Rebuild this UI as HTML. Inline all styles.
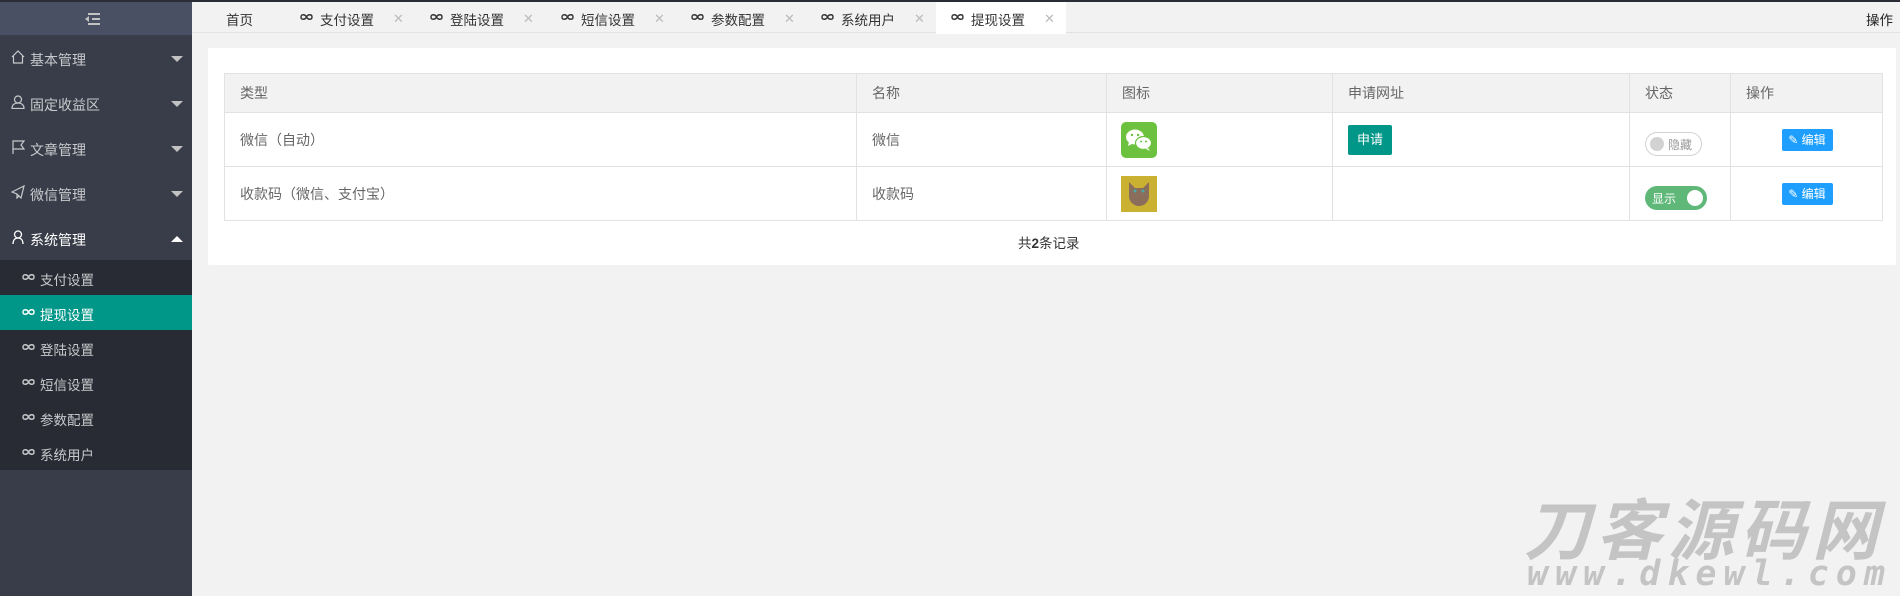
<!DOCTYPE html>
<html><head><meta charset="utf-8">
<style>
*{margin:0;padding:0;box-sizing:border-box}
body{width:1900px;height:596px;overflow:hidden;background:#f2f2f2;font-family:"Liberation Sans","Noto Sans CJK SC",sans-serif;font-size:14px;color:#666;position:relative}
.topline{position:absolute;left:0;top:0;width:1900px;height:2px;background:#2a2d35}
.side{position:absolute;left:0;top:2px;width:192px;height:594px;background:#393d49}
.shead{height:33px;background:#4a5064;position:relative}
.mi{height:45px;position:relative;color:#c8c9cc;font-size:14px}
.mi span{position:absolute;left:30px;top:15px}
.mi b{position:absolute;right:9px;top:21px;width:0;height:0;border-left:6px solid transparent;border-right:6px solid transparent;border-top:6px solid #c2c2c2}
.mi b.up{border-top:0;border-bottom:6px solid #fff}
.sub{background:#282b33;position:absolute;top:258px;left:0;width:192px}
.si{height:35px;position:relative;color:#c8c9cc;font-size:13.5px}
.si span{position:absolute;left:40px;top:9px}
.si svg{position:absolute;left:22px;top:13px}
.si.on{background:#009688;color:#fff}
.tabs{position:absolute;left:192px;top:2px;width:1708px;height:31px;background:#f2f2f2;border-bottom:1px solid #e2e2e2}
.tab{position:absolute;top:0;height:31px;font-size:13.5px;color:#333}
.tab svg{position:absolute;top:11px}
.tab .x{position:absolute;top:9px;color:#bbb;font-size:13px}
.card{position:absolute;left:208px;top:48px;width:1688px;height:217px;background:#fff;border-radius:2px}
table{position:absolute;left:16px;top:25px;border-collapse:collapse;width:1658px;table-layout:fixed}
td,th{border:1px solid #e2e2e2;text-align:left;font-weight:normal;padding:0 15px;font-size:14px;color:#666}
th{background:#f2f2f2;height:39px}
td{height:54px}
.btn{display:inline-block;background:#009688;color:#fff;font-size:13px;width:44px;height:30px;line-height:30px;text-align:center;border-radius:2px}
.edit{display:inline-block;background:#1e9fff;color:#fff;font-size:12px;width:51px;height:22px;line-height:22px;text-align:center;border-radius:2px}
.sw{display:inline-block;position:relative;height:24px;border-radius:12px;font-size:12px;vertical-align:middle}
</style></head><body>
<div class="topline"></div>
<div class="side">
 <div class="shead"><svg style="position:absolute;left:84px;top:10px" width="16" height="14" viewBox="0 0 16 14"><path d="M4 2h12M8 7h8M4 12h12" stroke="#c2c2c2" stroke-width="2"/><path d="M5 4L1 7l4 3z" fill="#c2c2c2"/></svg></div>
 <div class="mi"><svg style="position:absolute;left:11px;top:15px" width="14" height="14" viewBox="0 0 14 14"><path d="M1 7L7 1l6 6M2.5 6v7h9V6" stroke="#c8c9cc" fill="none" stroke-width="1.2"/></svg><span>基本管理</span><b></b></div>
 <div class="mi"><svg style="position:absolute;left:11px;top:15px" width="14" height="14" viewBox="0 0 14 14"><circle cx="7" cy="4.5" r="3.5" stroke="#c8c9cc" fill="none" stroke-width="1.2"/><path d="M1 13.5c0-4 3-5.5 6-5.5s6 1.5 6 5.5z" stroke="#c8c9cc" fill="none" stroke-width="1.2"/></svg><span>固定收益区</span><b></b></div>
 <div class="mi"><svg style="position:absolute;left:11px;top:15px" width="14" height="14" viewBox="0 0 14 14"><path d="M2 14V1h11l-3 4 3 4H2" stroke="#c8c9cc" fill="none" stroke-width="1.2"/></svg><span>文章管理</span><b></b></div>
 <div class="mi"><svg style="position:absolute;left:11px;top:15px" width="14" height="14" viewBox="0 0 14 14"><path d="M1 7l12-6-3 12-4-4zM6 9v4l2-2" stroke="#c8c9cc" fill="none" stroke-width="1.2"/></svg><span>微信管理</span><b></b></div>
 <div class="mi" style="color:#fff"><svg style="position:absolute;left:11px;top:15px" width="14" height="14" viewBox="0 0 14 14"><circle cx="7" cy="4.5" r="3.5" stroke="#fff" fill="none" stroke-width="1.3"/><path d="M2 14c0-4 2-6 5-6s5 2 5 6" stroke="#fff" fill="none" stroke-width="1.3"/></svg><span>系统管理</span><b class="up"></b></div>
 <div class="sub">
  <div class="si"><svg width="13" height="8" viewBox="0 0 13 8"><path d="M6.5 4C5 1 1 1 1 4s4 3 5.5 0C8 1 12 1 12 4s-4 3-5.5 0" stroke="currentColor" fill="none" stroke-width="1.4"/></svg><span>支付设置</span></div>
  <div class="si on"><svg width="13" height="8" viewBox="0 0 13 8"><path d="M6.5 4C5 1 1 1 1 4s4 3 5.5 0C8 1 12 1 12 4s-4 3-5.5 0" stroke="currentColor" fill="none" stroke-width="1.4"/></svg><span>提现设置</span></div>
  <div class="si"><svg width="13" height="8" viewBox="0 0 13 8"><path d="M6.5 4C5 1 1 1 1 4s4 3 5.5 0C8 1 12 1 12 4s-4 3-5.5 0" stroke="currentColor" fill="none" stroke-width="1.4"/></svg><span>登陆设置</span></div>
  <div class="si"><svg width="13" height="8" viewBox="0 0 13 8"><path d="M6.5 4C5 1 1 1 1 4s4 3 5.5 0C8 1 12 1 12 4s-4 3-5.5 0" stroke="currentColor" fill="none" stroke-width="1.4"/></svg><span>短信设置</span></div>
  <div class="si"><svg width="13" height="8" viewBox="0 0 13 8"><path d="M6.5 4C5 1 1 1 1 4s4 3 5.5 0C8 1 12 1 12 4s-4 3-5.5 0" stroke="currentColor" fill="none" stroke-width="1.4"/></svg><span>参数配置</span></div>
  <div class="si"><svg width="13" height="8" viewBox="0 0 13 8"><path d="M6.5 4C5 1 1 1 1 4s4 3 5.5 0C8 1 12 1 12 4s-4 3-5.5 0" stroke="currentColor" fill="none" stroke-width="1.4"/></svg><span>系统用户</span></div>
 </div>
</div>
<div class="tabs">
 <div class="tab" style="left:34px;width:60px"><span style="position:absolute;top:7px">首页</span></div>
 <div class="tab" style="left:744px;width:130px;background:#fff;height:32px"></div>
 <div class="tab" style="left:108px"><svg width="13" height="8" viewBox="0 0 13 8"><path d="M6.5 4C5 1 1 1 1 4s4 3 5.5 0C8 1 12 1 12 4s-4 3-5.5 0" stroke="#333" fill="none" stroke-width="1.4"/></svg><span style="position:absolute;left:20px;top:7px;white-space:nowrap">支付设置</span><span class="x" style="left:93px">✕</span></div>
 <div class="tab" style="left:238px"><svg width="13" height="8" viewBox="0 0 13 8"><path d="M6.5 4C5 1 1 1 1 4s4 3 5.5 0C8 1 12 1 12 4s-4 3-5.5 0" stroke="#333" fill="none" stroke-width="1.4"/></svg><span style="position:absolute;left:20px;top:7px;white-space:nowrap">登陆设置</span><span class="x" style="left:93px">✕</span></div>
 <div class="tab" style="left:369px"><svg width="13" height="8" viewBox="0 0 13 8"><path d="M6.5 4C5 1 1 1 1 4s4 3 5.5 0C8 1 12 1 12 4s-4 3-5.5 0" stroke="#333" fill="none" stroke-width="1.4"/></svg><span style="position:absolute;left:20px;top:7px;white-space:nowrap">短信设置</span><span class="x" style="left:93px">✕</span></div>
 <div class="tab" style="left:499px"><svg width="13" height="8" viewBox="0 0 13 8"><path d="M6.5 4C5 1 1 1 1 4s4 3 5.5 0C8 1 12 1 12 4s-4 3-5.5 0" stroke="#333" fill="none" stroke-width="1.4"/></svg><span style="position:absolute;left:20px;top:7px;white-space:nowrap">参数配置</span><span class="x" style="left:93px">✕</span></div>
 <div class="tab" style="left:629px"><svg width="13" height="8" viewBox="0 0 13 8"><path d="M6.5 4C5 1 1 1 1 4s4 3 5.5 0C8 1 12 1 12 4s-4 3-5.5 0" stroke="#333" fill="none" stroke-width="1.4"/></svg><span style="position:absolute;left:20px;top:7px;white-space:nowrap">系统用户</span><span class="x" style="left:93px">✕</span></div>
 <div class="tab" style="left:759px"><svg width="13" height="8" viewBox="0 0 13 8"><path d="M6.5 4C5 1 1 1 1 4s4 3 5.5 0C8 1 12 1 12 4s-4 3-5.5 0" stroke="#333" fill="none" stroke-width="1.4"/></svg><span style="position:absolute;left:20px;top:7px;white-space:nowrap">提现设置</span><span class="x" style="left:93px">✕</span></div>
 <div class="tab" style="left:1674px"><span style="position:absolute;top:7px;white-space:nowrap;color:#222">操作</span></div>
</div>
<div class="card">
<table>
<colgroup><col style="width:632px"><col style="width:250px"><col style="width:226px"><col style="width:297px"><col style="width:101px"><col style="width:152px"></colgroup>
<tr><th>类型</th><th>名称</th><th>图标</th><th>申请网址</th><th>状态</th><th>操作</th></tr>
<tr><td>微信（自动）</td><td>微信</td><td style="padding-left:14px"><svg width="36" height="36" viewBox="0 0 36 36" style="display:block"><rect width="36" height="36" rx="5" fill="#6cc13e"/><ellipse cx="14" cy="15" rx="9" ry="7.5" fill="#fff"/><path d="M8 20l-1 4 4-2z" fill="#fff"/><ellipse cx="22.5" cy="21" rx="8" ry="6.5" fill="#fff" stroke="#6cc13e" stroke-width="1.2"/><path d="M27 26l2 3-4-2z" fill="#fff"/><circle cx="11" cy="13" r="1.2" fill="#6cc13e"/><circle cx="17" cy="13" r="1.2" fill="#6cc13e"/><circle cx="20" cy="19.5" r="1" fill="#6cc13e"/><circle cx="25" cy="19.5" r="1" fill="#6cc13e"/></svg></td><td><span class="btn">申请</span></td><td style="padding-top:8px"><span class="sw" style="width:57px;border:1px solid #d2d2d2;background:#fff"><span style="position:absolute;left:4px;top:4px;width:14px;height:14px;border-radius:50%;background:#d2d2d2"></span><span style="position:absolute;left:22px;top:3px;color:#999">隐藏</span></span></td><td style="text-align:center;padding-right:14px"><span class="edit">✎ 编辑</span></td></tr>
<tr><td>收款码（微信、支付宝）</td><td>收款码</td><td style="padding-left:14px"><svg width="36" height="36" viewBox="0 0 36 36" style="display:block"><rect width="36" height="36" fill="#cbb132"/><path d="M8 6l6 6h8l6-6v14c0 6-5 10-10 10S8 26 8 20z" fill="#8a6d5a"/><circle cx="14" cy="15" r="1.5" fill="#4aa"/><circle cx="22" cy="15" r="1.5" fill="#4aa"/></svg></td><td></td><td style="padding-top:8px"><span class="sw" style="width:62px;background:#5fb878"><span style="position:absolute;left:7px;top:4px;color:#fff">显示</span><span style="position:absolute;right:4px;top:4px;width:16px;height:16px;border-radius:50%;background:#fff"></span></span></td><td style="text-align:center;padding-right:14px"><span class="edit">✎ 编辑</span></td></tr>
</table>
<div style="position:absolute;left:810px;top:184px;font-size:13.5px;color:#333">共<b>2</b>条记录</div>
</div>
<div style="position:absolute;left:1524px;top:492px;font-size:66px;font-weight:bold;font-style:italic;color:#c4c4c4;letter-spacing:6px;line-height:68px;font-family:'Noto Sans CJK SC',sans-serif">刀客源码网</div>
<div style="position:absolute;left:1527px;top:557px;font-size:35px;font-weight:bold;font-style:italic;color:#c4c4c4;letter-spacing:7px;line-height:34px;font-family:'DejaVu Sans Mono',monospace">www.dkewl.com</div>
</body></html>
